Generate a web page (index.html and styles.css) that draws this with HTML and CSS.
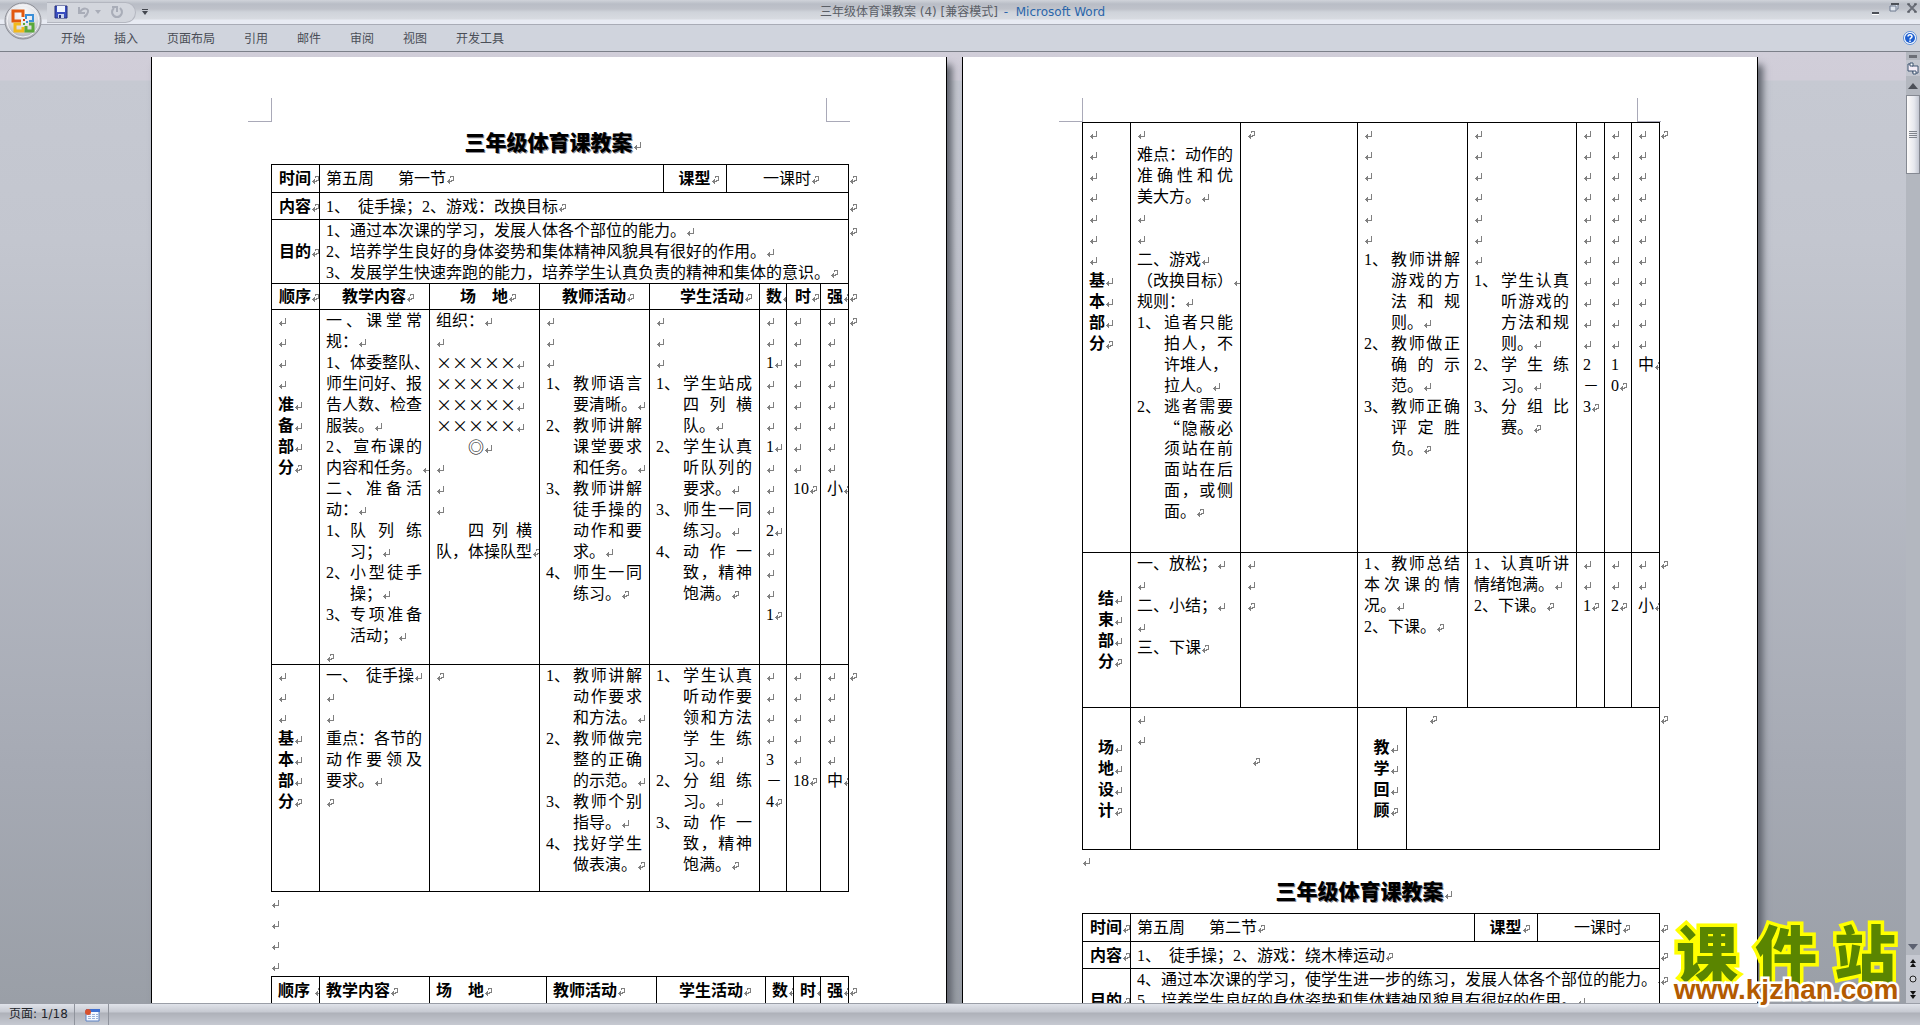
FILE: index.html
```html
<!DOCTYPE html>
<html lang="zh-CN">
<head>
<meta charset="utf-8">
<title>三年级体育课教案 (4) [兼容模式] - Microsoft Word</title>
<link rel="stylesheet" href="styles.css">
</head>
<body>
<div class="app">
<header class="titlebar">
  <div class="quick">
    <button class="tool" aria-label="保存"><svg width="14" height="14" viewBox="0 0 14 14"><path d="M1 1h12v12H1z" fill="#3a4ec0" stroke="#26307c"/><path d="M3 1h8v6H3z" fill="#eef4ff"/><path d="M4 9h6v4H4z" fill="#c8d4ee"/><path d="M5 10h2v3H5z" fill="#26307c"/></svg></button>
    <button class="tool undo" aria-label="撤消"><svg width="14" height="14" viewBox="0 0 14 14"><path d="M2 2v6h6M3 7c3-5 9-4 8 0-.5 2-2 4-4 5" fill="none" stroke="#a9adb8" stroke-width="2"/></svg><svg width="6" height="4" viewBox="0 0 6 4"><path d="M0 0h6L3 4z" fill="#a9adb8"/></svg></button>
    <button class="tool redo" aria-label="重复"><svg width="14" height="14" viewBox="0 0 14 14"><path d="M4 3c-4 4-1 9 3 9s7-5 3-9M7 7V2H2" fill="none" stroke="#a9adb8" stroke-width="2"/></svg></button>
  </div>
  <button class="tool more" aria-label="自定义快速访问工具栏"><svg width="6" height="6" viewBox="0 0 6 6"><path d="M0 0h6v1H0zM0 2h6L3 6z" fill="#44474f"/></svg></button>
  <h1 class="caption">三年级体育课教案 (4) [兼容模式] <span>- &nbsp;Microsoft Word</span></h1>
  <div class="winctl">
    <button class="tool" aria-label="最小化"><svg width="10" height="12" viewBox="0 0 10 12"><path d="M1 9h7v2H1z" fill="#4c5058"/><path d="M1 11h7v1H1z" fill="#fff"/></svg></button>
    <button class="tool" aria-label="还原"><svg width="10" height="10" viewBox="0 0 10 10"><path d="M2 1h7v5H8M1 3h6v5H1z" fill="#dfe5ee" stroke="#6e7a90"/><path d="M2 0h8v2H2z" fill="#4c5058"/></svg></button>
    <button class="tool" aria-label="关闭"><svg width="10" height="10" viewBox="0 0 10 10"><path d="M1 1l8 8M9 1L1 9" stroke="#6a6e78" stroke-width="2"/><path d="M0 1h3M7 1h3M0 9h3M7 9h3" stroke="#4c5058" stroke-width="1"/></svg></button>
  </div>
</header>
<nav class="ribbon">
  <a href="#">开始</a><a href="#">插入</a><a href="#">页面布局</a><a href="#">引用</a><a href="#">邮件</a><a href="#">审阅</a><a href="#">视图</a><a href="#">开发工具</a>
  <button class="tool help" aria-label="帮助"><svg width="14" height="14" viewBox="0 0 14 14"><circle cx="7" cy="7" r="6.5" fill="#fff" stroke="#5f8fd6"/><circle cx="7" cy="7" r="5" fill="#1e5fd0"/><path d="M5 5.5c0-2.5 4-2.5 4 0 0 1.300-2 1.300-2 3M7 9.500v1.500" fill="none" stroke="#fff" stroke-width="1.500"/></svg></button>
</nav>
<button class="orb" aria-label="Office 按钮">
  <svg width="38" height="38" viewBox="0 0 38 38">
    <defs><radialGradient id="g" cx=".5" cy=".3" r=".7"><stop offset="0" stop-color="#fff"/><stop offset=".6" stop-color="#dcdde2"/><stop offset="1" stop-color="#a9abb3"/></radialGradient></defs>
    <circle cx="19" cy="19" r="18" fill="url(#g)" stroke="#8b8d95"/>
    <circle cx="19" cy="19" r="16" fill="none" stroke="#f4f4f7"/>
    <path d="M17 19h-8v-10h10v6" fill="none" stroke="#e2590f" stroke-width="3"/>
    <path d="M22 17v-4h7v6h-4" fill="none" stroke="#3a8fd8" stroke-width="2"/>
    <path d="M17 22h-6v7h8v-4" fill="none" stroke="#f2b91c" stroke-width="3"/>
    <path d="M22 24v5h7v-7h-4" fill="none" stroke="#5aa83a" stroke-width="3"/>
    <path d="M19 17h2v2h-2z" fill="#d04010"/><path d="M22 19h2v2h-2z" fill="#3a8fd8"/><path d="M19 21h2v2h-2z" fill="#5aa83a"/>
  </svg>
</button>

<div class="work">
<main class="pages">
<article class="page">
  <div class="corners"><i></i><i></i></div>
  <h2>三年级体育课教案</h2>
  <table>
    <colgroup><col class="w48"><col class="w110"><col class="w110"><col class="w110"><col class="w14"><col class="w63"><col class="w33"><col class="w27"><col class="w34"><col class="w28"><col class="w20"></colgroup>
    <tr class="h28 mid"><th><p class="end">时间</p></th><td colspan="4"><p class="end">第五周　&nbsp;&nbsp;第一节</p></td><th><p class="end">课型</p></th><td colspan="4" class="center"><p class="end">一课时</p></td><td class="out"><p class="end"></p></td></tr>
    <tr class="h27 mid"><th><p class="end">内容</p></th><td colspan="9"><p class="end">1、&nbsp;&nbsp;徒手操；2、游戏：改换目标</p></td><td class="out"><p class="end"></p></td></tr>
    <tr><th class="mid"><p class="end">目的</p></th><td colspan="9"><p>1、通过本次课的学习，发展人体各个部位的能力。</p><p>2、培养学生良好的身体姿势和集体精神风貌具有很好的作用。</p><p class="end">3、发展学生快速奔跑的能力，培养学生认真负责的精神和集体的意识。</p></td><td class="out"><p class="end"></p></td></tr>
    <tr class="h26 mid"><th><p class="end">顺序</p></th><th><p class="end">教学内容</p></th><th><p class="end">场　地</p></th><th><p class="end">教师活动</p></th><th colspan="3"><p class="end">　学生活动</p></th><th><p class="end">数</p></th><th><p class="end">时</p></th><th><p class="end">强</p></th><td class="out"><p class="end"></p></td></tr>
    <tr>
      <th class="part"><p></p><p></p><p></p><p></p><p>准</p><p>备</p><p>部</p><p class="end">分</p></th>
      <td><div class="full"><p class="j">一、课堂常</p><p>规：</p><p class="c">1、体委整队、</p><p class="c">师生问好、报</p><p class="c">告人数、检查</p><p>服装。</p><p class="j">2、宣布课的</p><p>内容和任务。</p><p class="j">二、准备活</p><p>动：</p>
        <div class="item tight"><span>1、</span><div><p class="j">队列练</p><p>习；</p></div></div>
        <div class="item tight"><span>2、</span><div><p class="j">小型徒手</p><p>操；</p></div></div>
        <div class="item tight"><span>3、</span><div><p class="j">专项准备</p><p>活动；</p></div></div><p class="end"></p></div></td>
      <td><p>组织：</p><p></p><p class="cjk">×××××</p><p class="cjk">×××××</p><p class="cjk">×××××</p><p class="cjk">×××××</p><p class="cjk indent">◎</p><p></p><p></p><p></p><p class="j indent">四列横</p><p class="end">队，体操队型</p></td>
      <td><p></p><p></p><p></p>
        <div class="item"><span>1、</span><div><p class="j">教师语言</p><p>要清晰。</p></div></div>
        <div class="item"><span>2、</span><div><p class="j">教师讲解</p><p class="j">课堂要求</p><p>和任务。</p></div></div>
        <div class="item"><span>3、</span><div><p class="j">教师讲解</p><p class="j">徒手操的</p><p class="j">动作和要</p><p>求。</p></div></div>
        <div class="item"><span>4、</span><div><p class="j">师生一同</p><p class="end">练习。</p></div></div></td>
      <td colspan="3"><p></p><p></p><p></p>
        <div class="item"><span>1、</span><div><p class="j">学生站成</p><p class="j">四列横</p><p>队。</p></div></div>
        <div class="item"><span>2、</span><div><p class="j">学生认真</p><p class="j">听队列的</p><p>要求。</p></div></div>
        <div class="item"><span>3、</span><div><p class="j">师生一同</p><p>练习。</p></div></div>
        <div class="item"><span>4、</span><div><p class="j">动作一</p><p class="j">致，精神</p><p class="end">饱满。</p></div></div></td>
      <td><p></p><p></p><p>1</p><p></p><p></p><p></p><p>1</p><p></p><p></p><p></p><p>2</p><p></p><p></p><p></p><p class="end">1</p></td>
      <td><p></p><p></p><p></p><p></p><p></p><p></p><p></p><p></p><p class="end">10</p></td>
      <td><p></p><p></p><p></p><p></p><p></p><p></p><p></p><p></p><p class="end">小</p></td>
      <td class="out"><p class="end"></p></td>
    </tr>
    <tr class="h227">
      <th class="part"><p></p><p></p><p></p><p>基</p><p>本</p><p>部</p><p class="end">分</p></th>
      <td><p>一、&nbsp;&nbsp;徒手操</p><p></p><p></p><p class="c">重点：各节的</p><p class="j">动作要领及</p><p>要求。</p><p class="end"></p></td>
      <td><p class="end"></p></td>
      <td>
        <div class="item"><span>1、</span><div><p class="j">教师讲解</p><p class="j">动作要求</p><p>和方法。</p></div></div>
        <div class="item"><span>2、</span><div><p class="j">教师做完</p><p class="j">整的正确</p><p>的示范。</p></div></div>
        <div class="item"><span>3、</span><div><p class="j">教师个别</p><p>指导。</p></div></div>
        <div class="item"><span>4、</span><div><p class="j">找好学生</p><p class="end">做表演。</p></div></div></td>
      <td colspan="3">
        <div class="item"><span>1、</span><div><p class="j">学生认真</p><p class="j">听动作要</p><p class="j">领和方法</p><p class="j">学生练</p><p>习。</p></div></div>
        <div class="item"><span>2、</span><div><p class="j">分组练</p><p>习。</p></div></div>
        <div class="item"><span>3、</span><div><p class="j">动作一</p><p class="j">致，精神</p><p class="end">饱满。</p></div></div></td>
      <td><p></p><p></p><p></p><p></p><p class="c">3</p><p class="c">－</p><p class="end">4</p></td>
      <td><p></p><p></p><p></p><p></p><p></p><p class="end">18</p></td>
      <td><p></p><p></p><p></p><p></p><p></p><p class="end">中</p></td>
      <td class="out"><p class="end"></p></td>
    </tr>
  </table>
  <p></p><p></p><p></p><p></p>
  <table>
    <colgroup><col class="w48"><col class="w110"><col class="w117"><col class="w110"><col class="w109"><col class="w28"><col class="w27"><col class="w28"><col class="w20"></colgroup>
    <tr class="h27 mid left"><th><p class="end">顺序&nbsp;</p></th><th><p class="end">教学内容</p></th><th><p class="end">场　地</p></th><th><p class="end">教师活动</p></th><th><p class="end">　学生活动</p></th><th><p class="end">数</p></th><th><p class="end">时</p></th><th><p class="end">强</p></th><td class="out"><p class="end"></p></td></tr>
  </table>
</article>

<article class="page">
  <div class="corners"><i></i><i></i></div>
  <table>
    <colgroup><col class="w48"><col class="w110"><col class="w117"><col class="w49"><col class="w61"><col class="w109"><col class="w28"><col class="w27"><col class="w28"><col class="w20"></colgroup>
    <tr class="h430">
      <th class="part"><p></p><p></p><p></p><p></p><p></p><p></p><p></p><p>基</p><p>本</p><p>部</p><p class="end">分</p></th>
      <td><p></p><p class="c">难点：动作的</p><p class="j">准确性和优</p><p>美大方。</p><p></p><p></p><p>二、游戏</p><p>（改换目标）</p><p>规则：</p>
        <div class="item"><span>1、</span><div><p class="j">追者只能</p><p class="j">拍人，不</p><p class="c">许堆人，</p><p>拉人。</p></div></div>
        <div class="item"><span>2、</span><div><p class="j">逃者需要</p><p class="j cjk">“隐蔽必</p><p class="j">须站在前</p><p class="j">面站在后</p><p class="j">面，或侧</p><p class="end">面。</p></div></div></td>
      <td><p class="end"></p></td>
      <td colspan="2"><p></p><p></p><p></p><p></p><p></p><p></p>
        <div class="item"><span>1、</span><div><p class="j">教师讲解</p><p class="j">游戏的方</p><p class="j">法和规</p><p>则。</p></div></div>
        <div class="item"><span>2、</span><div><p class="j">教师做正</p><p class="j">确的示</p><p>范。</p></div></div>
        <div class="item"><span>3、</span><div><p class="j">教师正确</p><p class="j">评定胜</p><p class="end">负。</p></div></div></td>
      <td><p></p><p></p><p></p><p></p><p></p><p></p><p></p>
        <div class="item"><span>1、</span><div><p class="j">学生认真</p><p class="j">听游戏的</p><p class="j">方法和规</p><p>则。</p></div></div>
        <div class="item"><span>2、</span><div><p class="j">学生练</p><p>习。</p></div></div>
        <div class="item"><span>3、</span><div><p class="j">分组比</p><p class="end">赛。</p></div></div></td>
      <td><p></p><p></p><p></p><p></p><p></p><p></p><p></p><p></p><p></p><p></p><p></p><p class="c">2</p><p class="c">－</p><p class="end">3</p></td>
      <td><p></p><p></p><p></p><p></p><p></p><p></p><p></p><p></p><p></p><p></p><p></p><p class="c">1</p><p class="end">0</p></td>
      <td><p></p><p></p><p></p><p></p><p></p><p></p><p></p><p></p><p></p><p></p><p></p><p class="end">中</p></td>
      <td class="out"><p class="end"></p></td>
    </tr>
    <tr class="h155">
      <th class="mid"><p>结</p><p>束</p><p>部</p><p class="end">分</p></th>
      <td><p>一、放松；</p><p></p><p>二、小结；</p><p></p><p class="end">三、下课</p></td>
      <td><p></p><p></p><p class="end"></p></td>
      <td colspan="2"><p class="j">1、教师总结</p><p class="j">本次课的情</p><p>况。</p><p class="end">2、下课。</p></td>
      <td><p class="j">1、认真听讲</p><p>情绪饱满。</p><p class="end">2、下课。</p></td>
      <td><p></p><p></p><p class="end">1</p></td>
      <td><p></p><p></p><p class="end">2</p></td>
      <td><p></p><p></p><p class="end">小</p></td>
      <td class="out"><p class="end"></p></td>
    </tr>
    <tr class="h142">
      <th class="mid"><p>场</p><p>地</p><p>设</p><p class="end">计</p></th>
      <td colspan="2"><p></p><p></p><p class="end center">　</p></td>
      <th class="mid"><p>教</p><p>学</p><p>回</p><p class="end">顾</p></th>
      <td colspan="5"><p class="end">　</p></td>
      <td class="out"><p class="end"></p></td>
    </tr>
  </table>
  <p></p>
  <h2>三年级体育课教案</h2>
  <table>
    <colgroup><col class="w48"><col class="w344"><col class="w63"><col class="w122"><col class="w20"></colgroup>
    <tr class="h28 mid"><th><p class="end">时间</p></th><td><p class="end">第五周　&nbsp;&nbsp;第二节</p></td><th><p class="end">课型</p></th><td class="center"><p class="end">一课时</p></td><td class="out"><p class="end"></p></td></tr>
    <tr class="h27 mid"><th><p class="end">内容</p></th><td colspan="3"><p class="end">1、&nbsp;&nbsp;徒手操；2、游戏：绕木棒运动</p></td><td class="out"><p class="end"></p></td></tr>
    <tr class="h64"><th class="mid"><p class="end">目的</p></th><td colspan="3"><p>4、通过本次课的学习，使学生进一步的练习，发展人体各个部位的能力。</p><p>5、培养学生良好的身体姿势和集体精神风貌具有很好的作用。</p></td><td class="out"><p class="end"></p></td></tr>
  </table>
</article>
</main>

<aside class="scroll">
  <div class="split"></div>
  <button class="tool ruler" aria-label="标尺"><svg width="12" height="13" viewBox="0 0 12 13"><path d="M1 2h4v2h6v7H6V9H1z" fill="#f4ecf6" stroke="#3f5470"/><path d="M3 1h3v3H3zM6 9h3v3H6z" fill="#fff" stroke="#3f5470"/></svg></button>
  <button class="tool up" aria-label="向上滚动"><svg width="10" height="6" viewBox="0 0 10 6"><path d="M0 6h10L5 0z" fill="#4c5058"/></svg></button>
  <div class="track"><div class="thumb"><svg width="8" height="8" viewBox="0 0 8 8"><path d="M0 .5h8M0 2.500h8M0 4.500h8M0 6.500h8" stroke="#80848c"/></svg></div></div>
  <button class="tool down" aria-label="向下滚动"><svg width="10" height="6" viewBox="0 0 10 6"><path d="M0 0h10L5 6z" fill="#5c6170"/></svg></button>
  <button class="tool step" aria-label="前一页"><svg width="8" height="8" viewBox="0 0 8 8"><path d="M1 4h6L4 0zM1 8h6L4 4z" fill="#111"/></svg></button>
  <button class="tool step" aria-label="选择浏览对象"><svg width="8" height="8" viewBox="0 0 8 8"><circle cx="4" cy="4" r="3" fill="#d4d6dc" stroke="#222"/></svg></button>
  <button class="tool step" aria-label="下一页"><svg width="8" height="8" viewBox="0 0 8 8"><path d="M1 0h6L4 4zM1 4h6L4 8z" fill="#111"/></svg></button>
</aside>
</div>

<footer class="status">
  <span class="pageno">页面: 1/18</span>
  <button class="tool macro" aria-label="录制宏"><svg width="16" height="14" viewBox="0 0 16 14"><path d="M2 2h13v11H2z" fill="#f4f8ff" stroke="#5f83c4"/><path d="M2 1h14v3H2z" fill="#3f6fd0"/><path d="M4 6.500h10M4 8.500h10M4 10.500h10" stroke="#9bb0d8" stroke-dasharray="3 1"/><circle cx="4" cy="4" r="3" fill="#d8502c"/></svg></button>
</footer>

<div class="brand"><div class="name"><span>课</span><span>件</span><span>站</span></div><div class="url">www.kjzhan.com</div></div>
</div>
</body>
</html>
```
FILE: styles.css
```css
* { box-sizing: border-box; }
body {
  margin: 0;
  font-family: "Liberation Serif", "Noto Sans CJK SC", serif;
  font-size: 16px;
  line-height: 21px;
  color: #000;
  text-spacing-trim: space-all;
}
p, h1, h2 { margin: 0; font-weight: inherit; }
svg { display: block; }
.tool { display: flex; align-items: center; justify-content: center; padding: 0; border: 0; background: none; }

.app { position: relative; display: grid; grid-template-rows: 25px 27px 1fr 22px; height: 100vh; overflow: hidden; }

/* title bar */
.titlebar {
  display: flex;
  align-items: center;
  border-bottom: 1px solid #a9acb6;
  background: linear-gradient(#d0d3da 0, #b9bdc6 4px, #bfc2ca 9px, #cfd3da 12px, #d8dbe1 19px, #e8ebf3 20px);
  font: 12px/20px "DejaVu Sans", "Noto Sans CJK SC", sans-serif;
}
.quick {
  display: flex;
  align-items: center;
  gap: 9px;
  width: 89px;
  height: 21px;
  margin-left: 47px;
  padding-left: 7px;
  border: 1px solid #b4b7c0;
  border-left: 0;
  border-radius: 0 11px 11px 0;
  background: #d3d6dd;
}
.undo { gap: 4px; }
.more { margin-left: 6px; }
.caption { flex: 1; padding-right: 94px; font-size: 12px; text-align: center; color: #5a5e66; white-space: nowrap; }
.caption span { margin-left: 2px; color: #2a65aa; }
.winctl { display: flex; align-items: flex-start; gap: 8px; padding: 0 3px 6px 0; }

/* ribbon tabs */
.ribbon {
  display: flex;
  align-items: center;
  gap: 29px;
  padding: 0 3px 0 61px;
  border-bottom: 1px solid #7c8089;
  background: #d0d4dd;
  font: 12px/24px "Noto Sans CJK SC", sans-serif;
}
.ribbon a { color: #4a4e57; text-decoration: none; }
.help { margin-left: auto; }
.orb { position: absolute; left: 4px; top: 2px; padding: 0; border: 0; background: none; }

/* workspace */
.work {
  display: flex;
  min-height: 0;
  background: linear-gradient(#d1ced9 0, #d0cdd8 28px, #c6c9d2 29px, #c3c6cf 20%, #a6aab4 75%, #9a9fa7 100%);
}
.pages { flex: 1; display: flex; justify-content: center; gap: 15px; padding: 5px 0 0 3px; overflow: hidden; }
.page {
  flex: none;
  width: 796px;
  padding: 65px 0 0 119px;
  border: solid #000;
  border-width: 0 1px;
  background: #fff;
  box-shadow: 5px 8px 7px #5f636c;
}
.corners { display: flex; gap: 554px; height: 24px; margin: -24px 0 0 -23px; }
.corners i { width: 24px; border: solid #a9a9b8; border-width: 0 1px 1px 0; }
.corners i:last-child { border-width: 0 0 1px 1px; }
h2 {
  width: 555px;
  font-size: 21px;
  font-weight: 900;
  line-height: 42px;
  text-align: center;
  text-shadow: 1px 1px #8c8c94;
}

/* paragraph marks */
p { min-height: 21px; white-space: nowrap; }
p::after, h2::after {
  content: "";
  display: inline-block;
  width: 7px;
  height: 8px;
  margin: 0 -8px 0 1px;
  background: url("data:image/svg+xml,%3Csvg xmlns='http://www.w3.org/2000/svg' width='7' height='8' shape-rendering='crispEdges'%3E%3Cpath d='M6 0h1v5H6zM1 5h6v1H1zM0 5h1v1H0zM1 4h2v3H1zM2 3h1v5H2z' fill='%23808080'/%3E%3C/svg%3E");
}
p.end::after {
  background-image: url("data:image/svg+xml,%3Csvg xmlns='http://www.w3.org/2000/svg' width='7' height='8' shape-rendering='crispEdges'%3E%3Cpath d='M3 0h4v1H3zM6 0h1v5H6zM3 0h1v2H3zM4 4h3v1H4zM0 5h5v1H0zM1 4h2v3H1zM2 3h1v5H2z' fill='%23808080'/%3E%3C/svg%3E");
}
p.j::after, p.c::after { content: none; }
.j { text-align: justify; text-align-last: justify; }
.indent { padding-left: 32px; }
.cjk { font-family: "Noto Sans CJK SC", sans-serif; }
.item { display: grid; grid-template-columns: 27px 1fr; }
.item.tight { grid-template-columns: 24px 1fr; }

/* lesson tables */
table { width: 597px; table-layout: fixed; border-collapse: collapse; }
th, td { padding: 0 7px 0 6px; border: 1px solid #000; overflow: hidden; vertical-align: top; text-align: left; font-weight: 400; }
th { font-weight: 700; text-align: center; }
th.part, .left th { text-align: left; }
.mid th, .mid td, th.mid { vertical-align: middle; }
.center { text-align: center; }
td.out { padding: 0; border-width: 0 0 0 1px; }
.full { height: 354px; }
.w14 { width: 14px; } .w20 { width: 20px; } .w27 { width: 27px; } .w28 { width: 28px; }
.w33 { width: 33px; } .w34 { width: 34px; } .w48 { width: 48px; } .w49 { width: 49px; }
.w61 { width: 61px; } .w63 { width: 63px; } .w109 { width: 109px; } .w110 { width: 110px; }
.w117 { width: 117px; } .w122 { width: 122px; } .w344 { width: 344px; }
.h26 { height: 26px; } .h27 { height: 27px; } .h28 { height: 28px; } .h64 { height: 64px; }
.h142 { height: 142px; } .h155 { height: 155px; } .h227 { height: 227px; } .h430 { height: 430px; }

/* scroll bar */
.scroll { display: flex; flex-direction: column; width: 14px; background: #b3b7bf; }
.split { height: 3px; margin: 3px 3px 2px; background: #6b6e76; }
.ruler { height: 16px; background: #c3c6cf; }
.up { height: 19px; }
.track { flex: 1; }
.thumb { display: flex; align-items: center; justify-content: center; height: 79px; border: 1px solid #858992; background: linear-gradient(90deg, #fdfbfa, #e6e8ee 60%, #c3c7d2); }
.down { height: 16px; }
.step { height: 16px; background: #c6c9d1; }

/* status bar */
.status {
  display: flex;
  border-top: 1px solid #9a9ea7;
  background: linear-gradient(#e0e3ea 0, #c6c9d1 8px, #aeb1b9 9px, #c6c9d1 100%);
  font: 12px/21px "DejaVu Sans", "Noto Sans CJK SC", sans-serif;
  color: #22252b;
}
.pageno { width: 75px; padding-left: 9px; border-right: 1px solid #8f939c; white-space: nowrap; }
.macro { width: 34px; border-right: 1px solid #8f939c; }

/* site badge over the page */
.brand { position: absolute; right: 20px; bottom: 22px; width: 228px; }
.name { display: flex; justify-content: space-between; padding: 0 4px; font: 900 62px/52px "Noto Sans CJK SC", sans-serif; color: #5a8500; -webkit-text-stroke: 7px #ffff00; paint-order: stroke fill; }
.url { font: bold 28px/26px "Liberation Sans", sans-serif; color: #b35a00; text-align: center; -webkit-text-stroke: 5px #fff; paint-order: stroke fill; }
```
